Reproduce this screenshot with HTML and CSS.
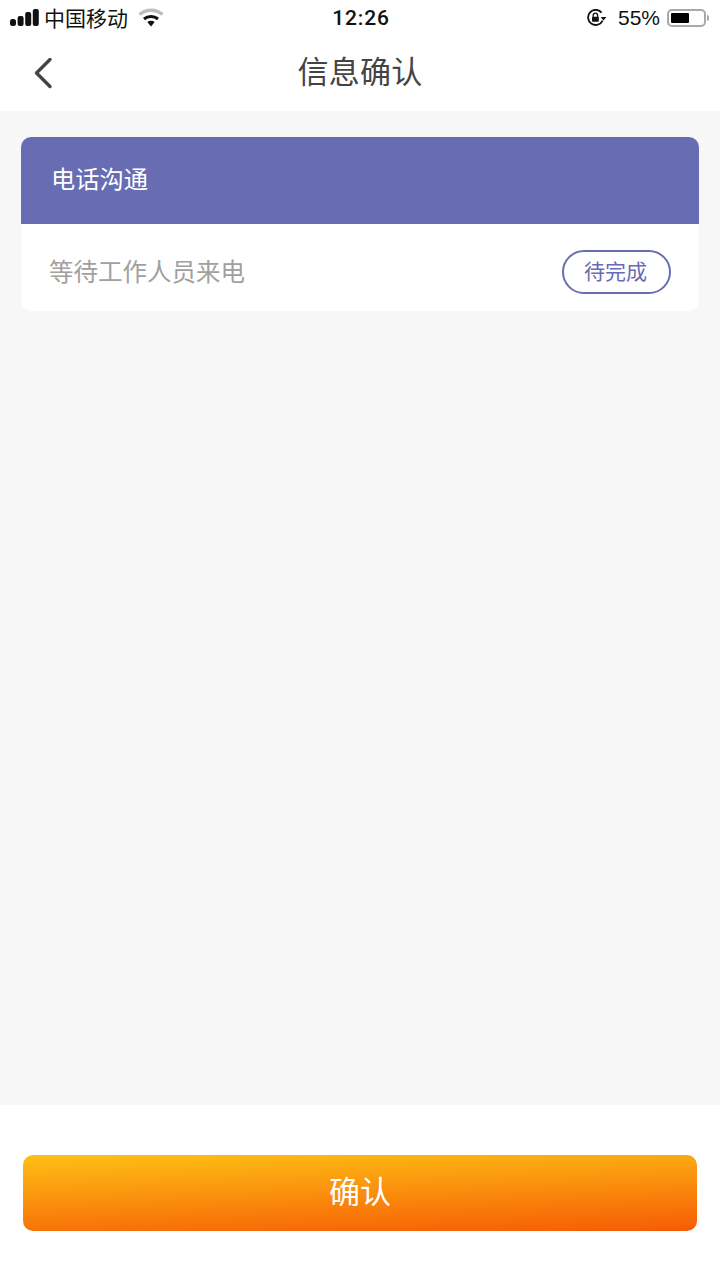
FILE: index.html
```html
<!DOCTYPE html>
<html lang="zh-CN">
  <head>
    <meta charset="UTF-8" />
    <meta name="viewport" content="width=device-width, initial-scale=1.0" />
    <title>信息确认</title>
    <link rel="stylesheet" href="styles.css">
  </head>
  <body>
    <div class="page">
      <div class="status-bar">
        <div class="status-left">
          <svg class="signal" width="29" height="18" viewBox="0 0 29 18">
            <rect x="0" y="11" width="6" height="7" rx="2.5" />
            <rect x="7.6" y="8" width="6" height="10" rx="2" />
            <rect x="15.2" y="4" width="6" height="14" rx="2" />
            <rect x="22.8" y="1" width="6" height="17" rx="2" />
          </svg>
          <span class="carrier">中国移动</span>
          <svg class="wifi" width="26" height="20" viewBox="0 0 26 20" fill="none">
            <path d="M1.5 6.5 C8 0.8 18 0.8 24.5 6.5" stroke="#bdbdbd" stroke-width="3.4" />
            <path d="M6 11 C10 7.5 16 7.5 20 11" stroke="#111" stroke-width="3" />
            <path d="M9.3 14 L13 18.5 L16.7 14 C14.5 12.3 11.5 12.3 9.3 14 Z" fill="#111" />
          </svg>
        </div>
        <div class="clock">12:26</div>
        <div class="status-right">
          <svg class="lock" width="20" height="18" viewBox="0 0 20 18" fill="none">
            <path d="M14.6 3.6 A7.6 7.6 0 1 0 15.6 11.6" stroke="#111" stroke-width="1.8" />
            <path d="M13.6 8 L19.4 8 L16.5 11.6 Z" fill="#111" />
            <path d="M6.2 8 V6.4 A2.2 2.2 0 0 1 10.6 6.4 V8" stroke="#111" stroke-width="1.3" />
            <rect x="5" y="7.8" width="6.8" height="5" rx="0.8" fill="#111" />
          </svg>
          <span class="battery-text">55%</span>
          <div class="battery">
            <div class="battery-level"></div>
          </div>
          <div class="battery-cap"></div>
        </div>
      </div>

      <div class="nav-bar">
        <svg class="back" width="20" height="32" viewBox="0 0 20 32" fill="none">
          <path d="M17 2.5 L3.5 16 L17 29.5" stroke="#444" stroke-width="3.4" stroke-linecap="round" stroke-linejoin="round" />
        </svg>
        <h1>信息确认</h1>
      </div>

      <div class="content">
        <div class="card">
          <div class="card-header">电话沟通</div>
          <div class="card-row">
            <span class="row-label">等待工作人员来电</span>
            <span class="tag">待完成</span>
          </div>
        </div>
      </div>

      <div class="footer">
        <button type="button" class="confirm-btn">确认</button>
      </div>
    </div>
  </body>
</html>
```

FILE: styles.css
```css
body {
  margin: 0;
  padding: 0;
  font-family: "Noto Sans CJK SC", "Liberation Sans", sans-serif;
  background-color: #fff;
}
.page {
  width: 720px;
  height: 1280px;
  display: flex;
  flex-direction: column;
  overflow: hidden;
}
.status-bar {
  height: 36px;
  padding: 0 11px 0 10px;
  display: flex;
  align-items: center;
  justify-content: space-between;
  position: relative;
  color: #111;
  font-size: 21px;
}
.status-left,
.status-right {
  display: flex;
  align-items: center;
}
.signal {
  fill: #111;
  margin-right: 5px;
  margin-bottom: 2px;
}
.carrier {
  line-height: 36px;
  padding-bottom: 3px;
}
.wifi {
  margin-left: 10px;
}
.clock {
  position: absolute;
  left: 2px;
  right: 0;
  text-align: center;
  font-family: Roboto, "Liberation Sans", sans-serif;
  font-size: 21px;
  font-weight: 500;
  letter-spacing: 0.8px;
}
.lock {
  margin-right: 11px;
}
.battery-text {
  font-family: "Liberation Sans", sans-serif;
  font-size: 21px;
  margin-right: 7px;
}
.battery {
  box-sizing: border-box;
  width: 39px;
  height: 18px;
  padding: 2px;
  border: 2px solid #a9a9a9;
  border-radius: 5px;
}
.battery-level {
  width: 18px;
  height: 100%;
  background-color: #000;
  border-radius: 1px;
}
.battery-cap {
  width: 2px;
  height: 6px;
  margin-left: 1px;
  background-color: #a9a9a9;
  border-radius: 0 2px 2px 0;
}
.nav-bar {
  box-sizing: border-box;
  height: 75px;
  padding-bottom: 8px;
  display: flex;
  align-items: center;
  justify-content: center;
  position: relative;
}
.back {
  position: absolute;
  left: 33px;
  top: 21px;
}
.nav-bar h1 {
  margin: 0;
  font-size: 31px;
  font-weight: 400;
  color: #444;
  letter-spacing: 0.3px;
}
.content {
  flex: 1;
  background-color: #f7f7f7;
  padding: 26px 21px 0;
}
.card {
  background-color: #fff;
  border-radius: 10px;
  overflow: hidden;
}
.card-header {
  box-sizing: border-box;
  height: 87px;
  padding: 0 0 6px 30px;
  display: flex;
  align-items: center;
  background-color: #686cb2;
  color: #fff;
  font-size: 24.25px;
}
.card-row {
  box-sizing: border-box;
  height: 87px;
  padding: 9px 28px 0;
  display: flex;
  align-items: center;
  justify-content: space-between;
}
.row-label {
  font-size: 24.5px;
  padding-bottom: 4px;
  color: #a0a0a0;
}
.tag {
  box-sizing: border-box;
  width: 109px;
  height: 44px;
  padding: 0 2px 4px 0;
  border: 2px solid #686cb2;
  border-radius: 22px;
  display: flex;
  align-items: center;
  justify-content: center;
  color: #686cb2;
  font-size: 21px;
}
.footer {
  height: 175px;
  box-sizing: border-box;
  padding: 50px 23px 0;
  background-color: #fff;
}
.confirm-btn {
  width: 100%;
  height: 76px;
  border: none;
  border-radius: 10px;
  background: linear-gradient(178deg, #fec015, #f65c05);
  color: #fff;
  font-family: inherit;
  font-size: 31px;
  padding: 0 0 8px;
}
```
